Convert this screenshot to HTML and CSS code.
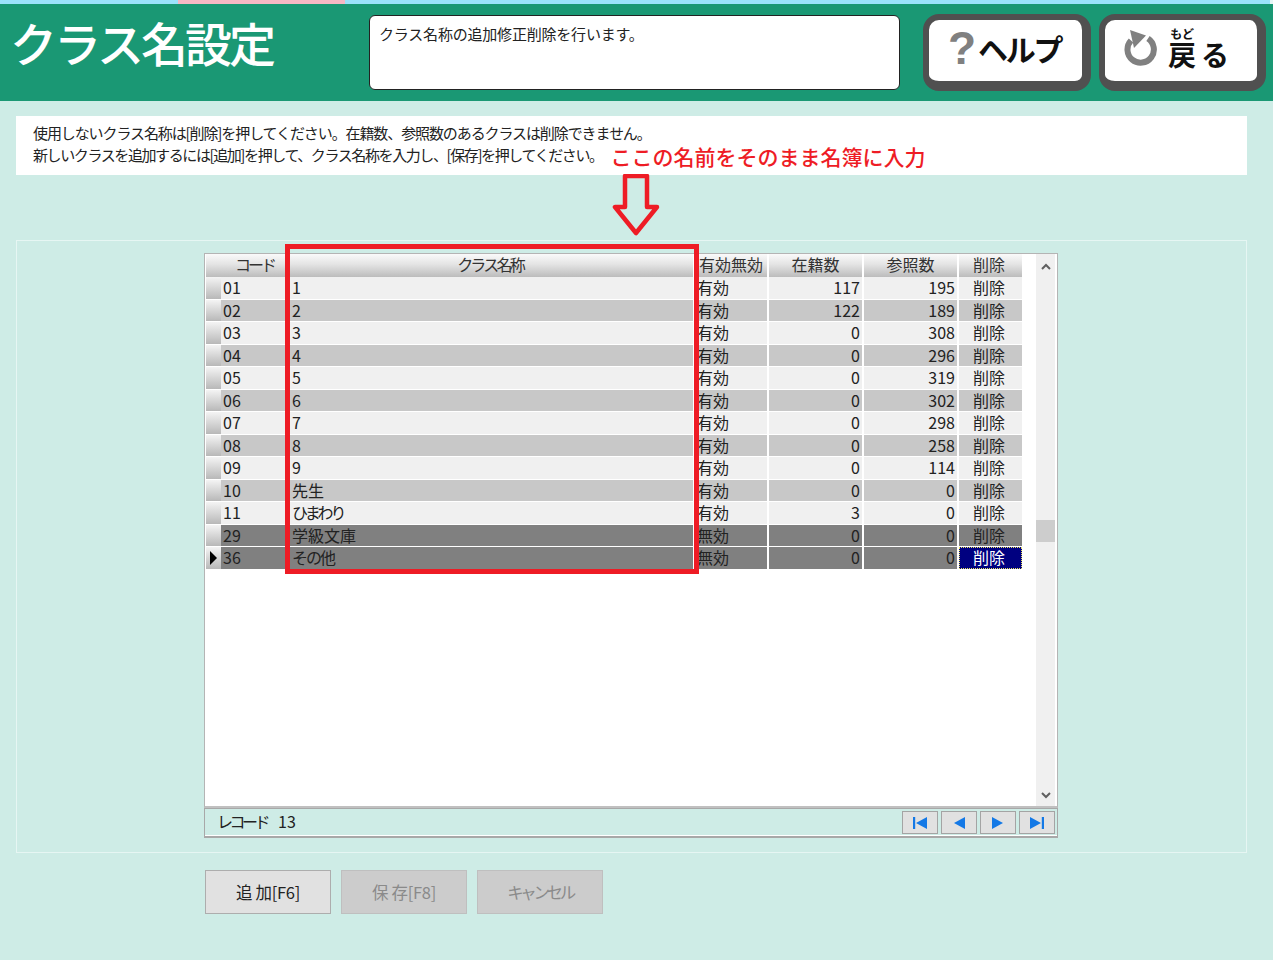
FILE: index.html
```html
<!DOCTYPE html>
<html lang="ja">
<head>
<meta charset="utf-8">
<title>クラス名設定</title>
<link rel="stylesheet" href="styles.css">
</head>
<body>
<div class="strip"></div>
<header class="header">
  <h1 class="title">クラス名設定</h1>
  <div class="desc">クラス名称の追加修正削除を行います。</div>
  <button class="hbtn help"><span class="q">?</span><span class="hlabel">ヘルプ</span></button>
  <button class="hbtn back">
    <svg class="refresh" width="36" height="36" viewBox="0 0 36 36"><path d="M25 8.5A13.2 13.2 0 1 1 8 10.5" fill="none" stroke="#808080" stroke-width="6"/><path d="M7 0L23 5.5L11 18Z" fill="#808080"/></svg>
    <span class="backlabel"><span class="kanji"><span class="furi">もど</span><span class="modo">戻</span></span><span class="ru">る</span></span>
  </button>
</header>
<section class="notice">
  <p class="line">使用しないクラス名称は[削除]を押してください。在籍数、参照数のあるクラスは削除できません。</p>
  <div class="line second"><span>新しいクラスを追加するには[追加]を押して、クラス名称を入力し、[保存]を押してください。</span><span class="redtext">ここの名前をそのまま名簿に入力</span></div>
</section>
<svg class="arrow" width="50" height="64" viewBox="0 0 50 64"><path d="M13 2H35V33H45L24 59L3 33H13Z" fill="none" stroke="#ee1c25" stroke-width="4.5" stroke-linejoin="round"/></svg>
<main class="panel">
  <div class="gridwrap">
    <div class="redbox"></div>
    <div class="grid">
      <div class="table">
        <div class="row head"><div class="ind"></div><div class="c ctr hcode">コード</div><div class="c ctr hname">クラス名称</div><div class="c ctr">有効無効</div><div class="c ctr">在籍数</div><div class="c ctr">参照数</div><div class="c ctr del">削除</div></div>
        <div class="row light"><div class="ind"></div><div class="c">01</div><div class="c">1</div><div class="c">有効</div><div class="c num">117</div><div class="c num">195</div><div class="c ctr del">削除</div></div>
        <div class="row mid"><div class="ind"></div><div class="c">02</div><div class="c">2</div><div class="c">有効</div><div class="c num">122</div><div class="c num">189</div><div class="c ctr del">削除</div></div>
        <div class="row light"><div class="ind"></div><div class="c">03</div><div class="c">3</div><div class="c">有効</div><div class="c num">0</div><div class="c num">308</div><div class="c ctr del">削除</div></div>
        <div class="row mid"><div class="ind"></div><div class="c">04</div><div class="c">4</div><div class="c">有効</div><div class="c num">0</div><div class="c num">296</div><div class="c ctr del">削除</div></div>
        <div class="row light"><div class="ind"></div><div class="c">05</div><div class="c">5</div><div class="c">有効</div><div class="c num">0</div><div class="c num">319</div><div class="c ctr del">削除</div></div>
        <div class="row mid"><div class="ind"></div><div class="c">06</div><div class="c">6</div><div class="c">有効</div><div class="c num">0</div><div class="c num">302</div><div class="c ctr del">削除</div></div>
        <div class="row light"><div class="ind"></div><div class="c">07</div><div class="c">7</div><div class="c">有効</div><div class="c num">0</div><div class="c num">298</div><div class="c ctr del">削除</div></div>
        <div class="row mid"><div class="ind"></div><div class="c">08</div><div class="c">8</div><div class="c">有効</div><div class="c num">0</div><div class="c num">258</div><div class="c ctr del">削除</div></div>
        <div class="row light"><div class="ind"></div><div class="c">09</div><div class="c">9</div><div class="c">有効</div><div class="c num">0</div><div class="c num">114</div><div class="c ctr del">削除</div></div>
        <div class="row mid"><div class="ind"></div><div class="c">10</div><div class="c">先生</div><div class="c">有効</div><div class="c num">0</div><div class="c num">0</div><div class="c ctr del">削除</div></div>
        <div class="row light"><div class="ind"></div><div class="c">11</div><div class="c kana4">ひまわり</div><div class="c">有効</div><div class="c num">3</div><div class="c num">0</div><div class="c ctr del">削除</div></div>
        <div class="row dark"><div class="ind"></div><div class="c">29</div><div class="c">学級文庫</div><div class="c">無効</div><div class="c num">0</div><div class="c num">0</div><div class="c ctr del">削除</div></div>
        <div class="row dark"><div class="ind cur"><span class="tri"></span></div><div class="c">36</div><div class="c kana3">その他</div><div class="c">無効</div><div class="c num">0</div><div class="c num">0</div><div class="c ctr del sel">削除</div></div>
      </div>
      <div class="scroll">
        <svg class="chev" width="10" height="7" viewBox="0 0 10 7"><path d="M1 6L5 2L9 6" fill="none" stroke="#606060" stroke-width="2"/></svg>
        <div class="thumb"></div>
        <svg class="chev" width="10" height="7" viewBox="0 0 10 7"><path d="M1 1L5 5L9 1" fill="none" stroke="#606060" stroke-width="2"/></svg>
      </div>
    </div>
    <div class="status">
      <span class="reclabel">レコード</span><span class="reccount">13</span>
      <div class="navs">
        <button class="nav"><svg width="16" height="12" viewBox="0 0 16 12"><path d="M1 0H3.2V12H1ZM15 0V12L4 6Z" fill="#1479e6"/></svg></button>
        <button class="nav"><svg width="12" height="12" viewBox="0 0 12 12"><path d="M12 0V12L1 6Z" fill="#1479e6"/></svg></button>
        <button class="nav"><svg width="12" height="12" viewBox="0 0 12 12"><path d="M0 0V12L11 6Z" fill="#1479e6"/></svg></button>
        <button class="nav"><svg width="16" height="12" viewBox="0 0 16 12"><path d="M1 0V12L12 6ZM12.8 0H15V12H12.8Z" fill="#1479e6"/></svg></button>
      </div>
    </div>
  </div>
</main>
<footer class="actions">
  <button class="act">追 加[F6]</button>
  <button class="act off">保 存[F8]</button>
  <button class="act off cancel">キャンセル</button>
</footer>
</body>
</html>
```
FILE: styles.css
```css
* { box-sizing: border-box; }
html, body { margin: 0; padding: 0; }
body {
  width: 1273px;
  height: 960px;
  overflow: hidden;
  background: #ceece6;
  font-family: "Noto Sans CJK JP", "Liberation Sans", sans-serif;
  font-size: 15px;
  color: #222;
  position: relative;
}
button { font-family: inherit; padding: 0; cursor: default; }
.strip {
  height: 4px;
  background: linear-gradient(90deg, #9be3fb 0, #9be3fb 178px, #f6b8c4 178px, #f6b8c4 345px, #9be3fb 345px, #9be3fb 1270px, #e6f6f6 1270px);
}
.header {
  height: 97px;
  background: #1a9874;
  display: flex;
  align-items: flex-start;
  padding: 10px 7px 0 10px;
}
.title {
  margin: -2px 0 0;
  width: 359px;
  font-size: 47px;
  line-height: 60px;
  font-weight: 500;
  color: #fff;
  letter-spacing: -3px;
  white-space: nowrap;
}
.desc {
  width: 531px;
  height: 75px;
  margin-top: 1px;
  background: #fff;
  border: 1px solid #222;
  border-radius: 6px;
  padding: 7px 9px;
  font-size: 15px;
  line-height: 22px;
  letter-spacing: -0.2px;
  white-space: nowrap;
}
.hbtn {
  height: 77px;
  background: #fff;
  border-style: solid;
  border-color: #505050;
  border-width: 6px 9px 10px 6px;
  border-radius: 16px;
  display: flex;
  align-items: center;
}
.help { width: 168px; margin-left: 23px; padding: 0 0 5px 19px; }
.back { width: 167px; margin-left: 8px; padding: 0 0 5px 18px; }
.q { font-family: "Liberation Sans", sans-serif; font-size: 46px; font-weight: 700; color: #808080; line-height: 46px; width: 30px; text-align: left; }
.hlabel { font-size: 30px; line-height: 36px; font-weight: 700; color: #111; letter-spacing: -2.2px; white-space: nowrap; }
.refresh { flex: none; }
.backlabel { margin-left: 9px; font-size: 28px; font-weight: 700; color: #111; display: flex; align-items: flex-end; }
.kanji { display: flex; flex-direction: column; align-items: center; }
.furi { font-size: 12px; line-height: 12px; }
.modo { line-height: 29px; }
.ru { margin-left: 5px; line-height: 29px; }
.notice {
  margin: 15px 26px 0 16px;
  height: 59px;
  background: #fff;
  padding: 6px 0 0 17px;
}
.line { margin: 0; font-size: 15px; line-height: 22px; height: 22px; letter-spacing: -1.1px; white-space: nowrap; }
.second { display: flex; align-items: center; letter-spacing: -1.4px; }
.redtext { margin-left: 8px; margin-top: 1px; font-size: 21px; line-height: 26px; font-weight: 500; color: #ee1c25; letter-spacing: 0; }
.arrow { position: absolute; left: 612px; top: 174px; }
.panel {
  margin: 65px 26px 0 16px;
  height: 613px;
  border: 1px solid #e6f6f3;
  padding: 12px 0 0 187px;
}
.gridwrap { position: relative; width: 854px; }
.redbox {
  position: absolute;
  left: 81px;
  top: -9.5px;
  width: 414px;
  height: 330.5px;
  border: 5px solid #ee1c25;
  z-index: 2;
}
.grid {
  height: 555px;
  background: #fff;
  border: 1px solid #b4b4b4;
  border-bottom: 2px solid #c0c0c0;
  display: flex;
  justify-content: space-between;
  padding-right: 2px;
}
.table { width: 818px; }
.row {
  display: grid;
  grid-template-columns: 13px 67px 403px 72px 93px 93px 63px;
  column-gap: 2px;
  height: 22.5px;
  padding-bottom: 1px;
  padding-left: 1px;
  font-size: 16px;
  line-height: 21px;
  white-space: nowrap;
}
.head { height: 23px; line-height: 21px; padding-bottom: 0; color: #333; }
.head .c, .head .ind { background: linear-gradient(#fafafa, #e4e4e4 45%, #bcbcbc); }
.ind { margin-right: -2px; background: linear-gradient(#f4f4f4, #b8b8b8); position: relative; display: flex; align-items: center; justify-content: center; }
.c { padding: 0 2px; overflow: visible; }
.ctr { text-align: center; }
.num { text-align: right; }
.del { padding-right: 5px; }
.hcode { letter-spacing: -3px; }
.hname { letter-spacing: -2.8px; padding-right: 5px; }
.kana4 { letter-spacing: -3.2px; }
.kana3 { letter-spacing: -2px; }
.light .c { background: #f0f0f0; }
.mid .c { background: #c8c8c8; }
.dark .c { background: #808080; }
.sel.sel { background: #000080; color: #fff; outline: 1px dotted #e8e060; outline-offset: -1px; }
.tri { width: 0; height: 0; border-left: 7px solid #000; border-top: 7px solid transparent; border-bottom: 7px solid transparent; }
.scroll {
  width: 19px;
  background: #f0f0f0;
  display: flex;
  flex-direction: column;
  align-items: center;
  position: relative;
  padding: 9px 0 7px;
  justify-content: space-between;
}
.thumb { position: absolute; left: 0; top: 266px; width: 19px; height: 22px; background: #cdcdcd; }
.status {
  height: 30px;
  border: 1px solid #a8a8a8;
  border-bottom-width: 2px;
  box-shadow: inset 0 -1px 0 #fff;
  display: flex;
  align-items: center;
  padding-left: 12px;
  padding-right: 2px;
  font-size: 16px;
}
.reclabel { letter-spacing: -3.5px; margin-bottom: 3px; }
.reccount { margin-left: 11px; margin-bottom: 3px; }
.navs { margin-left: auto; display: flex; gap: 3px; }
.nav { width: 36px; height: 23px; background: #e1e1e1; border: 1px solid #a4a4a4; display: flex; align-items: center; justify-content: center; }
.actions { margin: 17px 0 0 205px; display: flex; gap: 10px; }
.act { width: 126px; height: 44px; background: #e1e1e1; border: 1px solid #adadad; font-size: 16.5px; color: #222; letter-spacing: -0.3px; }
.off { background: #cccccc; border-color: #bfbfbf; color: #8a8a8a; }
.cancel { letter-spacing: -3.4px; }
```
